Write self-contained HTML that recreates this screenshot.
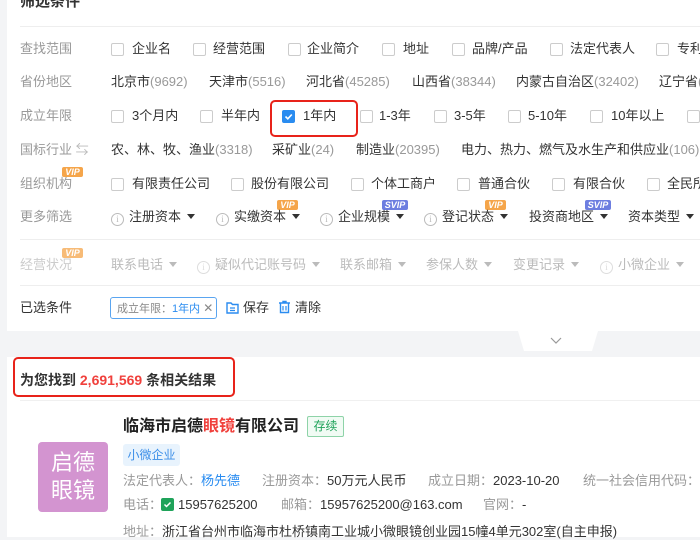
<!DOCTYPE html>
<html><head><meta charset="utf-8"><style>
*{margin:0;padding:0;box-sizing:border-box}
body{width:700px;height:530px;overflow:hidden;background:#f3f4f6;font-family:"Liberation Sans","Noto Sans CJK SC",sans-serif;font-size:13px;color:#333;position:relative}
.card{position:absolute;background:#fff;left:7px;width:700px}
.a{position:absolute;white-space:nowrap;line-height:16px}
.lb{color:#999}
.cb{position:absolute;width:13px;height:13px;border:1px solid #ccc;border-radius:2px;background:#fff}
.n{color:#999}
.i{display:inline-block;width:13px;height:13px;border:1px solid #bbb;border-radius:50%;font-size:9px;line-height:11px;text-align:center;color:#bbb;vertical-align:-1px;margin-right:5px;font-family:"Liberation Serif",serif}
.ar{display:inline-block;border-left:4px solid transparent;border-right:4px solid transparent;border-top:5px solid #333;vertical-align:2px;margin-left:6px}
.g .ar{border-top-color:#bbb}
.vip{position:absolute;height:10px;font:italic bold 9px/10px "Liberation Sans",sans-serif;color:#fff;text-align:center;border-radius:2px;background:#f5a54a}
.svip{background:#6d7ee0}
.line{position:absolute;height:1px;background:#eee}
</style></head><body>
<div class="card" style="top:0;height:331px"></div>
<div class="card" style="top:357px;height:180px"></div>

<div class="a" style="left:20px;top:-6px;font-size:15px;color:#333;font-weight:bold">筛选条件</div>
<div class="line" style="left:20px;top:26px;width:680px"></div>

<!-- row1 -->
<div class="a lb" style="left:20px;top:41px">查找范围</div>
<div class="cb" style="left:111px;top:43px"></div><div class="a" style="left:132px;top:41px">企业名</div>
<div class="cb" style="left:193px;top:43px"></div><div class="a" style="left:213px;top:41px">经营范围</div>
<div class="cb" style="left:288px;top:43px"></div><div class="a" style="left:307px;top:41px">企业简介</div>
<div class="cb" style="left:382px;top:43px"></div><div class="a" style="left:403px;top:41px">地址</div>
<div class="cb" style="left:452px;top:43px"></div><div class="a" style="left:472px;top:41px">品牌/产品</div>
<div class="cb" style="left:550px;top:43px"></div><div class="a" style="left:570px;top:41px">法定代表人</div>
<div class="cb" style="left:656px;top:43px"></div><div class="a" style="left:677px;top:41px">专利</div>

<!-- row2 -->
<div class="a lb" style="left:20px;top:74px">省份地区</div>
<div class="a" style="left:111px;top:74px">北京市<span class="n">(9692)</span></div>
<div class="a" style="left:209px;top:74px">天津市<span class="n">(5516)</span></div>
<div class="a" style="left:306px;top:74px">河北省<span class="n">(45285)</span></div>
<div class="a" style="left:412px;top:74px">山西省<span class="n">(38344)</span></div>
<div class="a" style="left:516px;top:74px">内蒙古自治区<span class="n">(32402)</span></div>
<div class="a" style="left:659px;top:74px">辽宁省<span class="n">(</span></div>

<!-- row3 -->
<div class="a lb" style="left:20px;top:108px">成立年限</div>
<div class="cb" style="left:111px;top:110px"></div><div class="a" style="left:132px;top:108px">3个月内</div>
<div class="cb" style="left:200px;top:110px"></div><div class="a" style="left:221px;top:108px">半年内</div>
<div style="position:absolute;left:270px;top:100px;width:88px;height:37px;border:2px solid #e8231a;border-radius:5px"></div>
<div class="cb" style="left:282px;top:110px;background:#2a8cf0;border-color:#2a8cf0"><svg width="11" height="11" style="position:absolute;left:0;top:0"><path d="M2.5 5.5l2.3 2.3 4-4.3" stroke="#fff" stroke-width="1.6" fill="none"/></svg></div>
<div class="a" style="left:303px;top:108px">1年内</div>
<div class="cb" style="left:360px;top:110px"></div><div class="a" style="left:379px;top:108px">1-3年</div>
<div class="cb" style="left:434px;top:110px"></div><div class="a" style="left:454px;top:108px">3-5年</div>
<div class="cb" style="left:508px;top:110px"></div><div class="a" style="left:528px;top:108px">5-10年</div>
<div class="cb" style="left:590px;top:110px"></div><div class="a" style="left:611px;top:108px">10年以上</div>
<div class="cb" style="left:687px;top:110px"></div>

<!-- row4 -->
<div class="a lb" style="left:20px;top:142px">国标行业 <span style="color:#bbb">⇆</span></div>
<div class="a" style="left:111px;top:142px">农、林、牧、渔业<span class="n">(3318)</span></div>
<div class="a" style="left:272px;top:142px">采矿业<span class="n">(24)</span></div>
<div class="a" style="left:356px;top:142px">制造业<span class="n">(20395)</span></div>
<div class="a" style="left:461px;top:142px">电力、热力、燃气及水生产和供应业<span class="n">(106)</span></div>

<!-- row5 -->
<div class="vip" style="left:62px;top:167px;width:21px">VIP</div>
<div class="a lb" style="left:20px;top:176px">组织机构</div>
<div class="cb" style="left:111px;top:178px"></div><div class="a" style="left:132px;top:176px">有限责任公司</div>
<div class="cb" style="left:231px;top:178px"></div><div class="a" style="left:251px;top:176px">股份有限公司</div>
<div class="cb" style="left:351px;top:178px"></div><div class="a" style="left:371px;top:176px">个体工商户</div>
<div class="cb" style="left:457px;top:178px"></div><div class="a" style="left:478px;top:176px">普通合伙</div>
<div class="cb" style="left:552px;top:178px"></div><div class="a" style="left:573px;top:176px">有限合伙</div>
<div class="cb" style="left:647px;top:178px"></div><div class="a" style="left:667px;top:176px">全民所</div>

<!-- row6 -->
<div class="a lb" style="left:20px;top:209px">更多筛选</div>
<div class="a" style="left:111px;top:209px"><span class="i">i</span>注册资本<span class="ar"></span></div>
<div class="vip" style="left:277px;top:200px;width:21px">VIP</div>
<div class="a" style="left:216px;top:209px"><span class="i">i</span>实缴资本<span class="ar"></span></div>
<div class="vip svip" style="left:382px;top:200px;width:26px">SVIP</div>
<div class="a" style="left:320px;top:209px"><span class="i">i</span>企业规模<span class="ar"></span></div>
<div class="vip" style="left:485px;top:200px;width:21px">VIP</div>
<div class="a" style="left:424px;top:209px"><span class="i">i</span>登记状态<span class="ar"></span></div>
<div class="vip svip" style="left:585px;top:200px;width:26px">SVIP</div>
<div class="a" style="left:529px;top:209px">投资商地区<span class="ar"></span></div>
<div class="a" style="left:628px;top:209px">资本类型<span class="ar"></span></div>

<div class="line" style="left:20px;top:239px;width:680px"></div>

<!-- row7 -->
<div class="vip" style="left:62px;top:248px;width:21px;opacity:.75">VIP</div>
<div class="g" style="color:#bbb">
<div class="a" style="left:20px;top:257px;color:#ccc">经营状况</div>
<div class="a" style="left:111px;top:257px">联系电话<span class="ar"></span></div>
<div class="a" style="left:197px;top:257px"><span class="i" style="border-color:#ddd;color:#ddd">i</span>疑似代记账号码<span class="ar"></span></div>
<div class="a" style="left:340px;top:257px">联系邮箱<span class="ar"></span></div>
<div class="a" style="left:426px;top:257px">参保人数<span class="ar"></span></div>
<div class="a" style="left:513px;top:257px">变更记录<span class="ar"></span></div>
<div class="a" style="left:600px;top:257px"><span class="i" style="border-color:#ddd;color:#ddd">i</span>小微企业<span class="ar"></span></div>
</div>

<div class="line" style="left:20px;top:285px;width:680px"></div>

<div class="a" style="left:20px;top:300px;color:#333">已选条件</div>
<div style="position:absolute;left:110px;top:297px;width:107px;height:22px;border:1px solid #5aa5f0;border-radius:3px;font-size:11px;line-height:20px;padding-left:6px;color:#888;white-space:nowrap">成立年限：<span style="color:#2a8cf0">1年内</span> <span style="color:#888;font-size:12px">✕</span></div>
<svg style="position:absolute;left:226px;top:301px" width="13" height="13"><path d="M1 2h4l1.5 1.5H12V12H1z" fill="none" stroke="#2a8cf0" stroke-width="1.4"/><path d="M4 7h5M4 9.5h5" stroke="#2a8cf0" stroke-width="1.2"/></svg>
<div class="a" style="left:243px;top:300px">保存</div>
<svg style="position:absolute;left:278px;top:300px" width="13" height="14"><path d="M1 3h11M5 3V1.5h3V3M2.5 3.5v9h8v-9" fill="none" stroke="#2a8cf0" stroke-width="1.4"/><path d="M5 6v4.5M8 6v4.5" stroke="#2a8cf0" stroke-width="1.2"/></svg>
<div class="a" style="left:295px;top:300px">清除</div>

<!-- collapse tab -->
<svg style="position:absolute;left:518px;top:331px" width="80" height="21"><path d="M0 0H80L74 20H6Z" fill="#fff"/><path d="M33 7l5 5 5-5" stroke="#999" stroke-width="1.2" fill="none"/></svg>

<!-- results -->
<div style="position:absolute;left:13px;top:357px;width:222px;height:40px;border:2px solid #e8231a;border-radius:5px"></div>
<div class="a" style="left:20px;top:372px;font-size:14px;font-weight:bold;color:#333">为您找到 <span style="color:#f0403c">2,691,569</span> 条相关结果</div>
<div class="line" style="left:20px;top:400px;width:680px;background:#f0f0f0"></div>

<div class="a" style="left:123px;top:416px;font-size:16px;line-height:22px;font-weight:bold;color:#222">临海市启德<span style="color:#f0403c">眼镜</span>有限公司</div>
<div style="position:absolute;left:307px;top:416px;width:37px;height:21px;border:1px solid #8ed3a8;border-radius:2px;color:#1fa35a;font-size:12px;line-height:19px;text-align:center;background:#f1fbf4">存续</div>
<div style="position:absolute;left:38px;top:442px;width:70px;height:70px;background:#d394d0;border-radius:4px;color:#fff;font-size:22px;line-height:28px;text-align:center;padding-top:7px">启德<br>眼镜</div>
<div style="position:absolute;left:123px;top:444px;width:57px;height:22px;background:#e8f3fd;border-radius:3px;color:#3b8ee8;font-size:12px;line-height:22px;text-align:center">小微企业</div>

<div class="a lb" style="left:123px;top:473px">法定代表人：<span style="color:#2a8cf0">杨先德</span></div>
<div class="a lb" style="left:262px;top:473px">注册资本：<span style="color:#333">50万元人民币</span></div>
<div class="a lb" style="left:428px;top:473px">成立日期：<span style="color:#333">2023-10-20</span></div>
<div class="a lb" style="left:583px;top:473px">统一社会信用代码：<span style="color:#333">9</span></div>

<div class="a lb" style="left:123px;top:497px">电话：</div>
<div style="position:absolute;left:161px;top:498px;width:13px;height:13px;background:#1fa35a;border-radius:2px"><svg width="13" height="13"><path d="M3.5 6.5l2 2 4-4" stroke="#fff" stroke-width="1.5" fill="none"/></svg></div>
<div class="a" style="left:178px;top:497px">15957625200</div>
<div class="a lb" style="left:281px;top:497px">邮箱：<span style="color:#333">15957625200@163.com</span></div>
<div class="a lb" style="left:483px;top:497px">官网：<span style="color:#333">-</span></div>

<div class="a lb" style="left:123px;top:524px">地址：<span style="color:#333">浙江省台州市临海市杜桥镇南工业城小微眼镜创业园15幢4单元302室(自主申报)</span></div>
</body></html>
